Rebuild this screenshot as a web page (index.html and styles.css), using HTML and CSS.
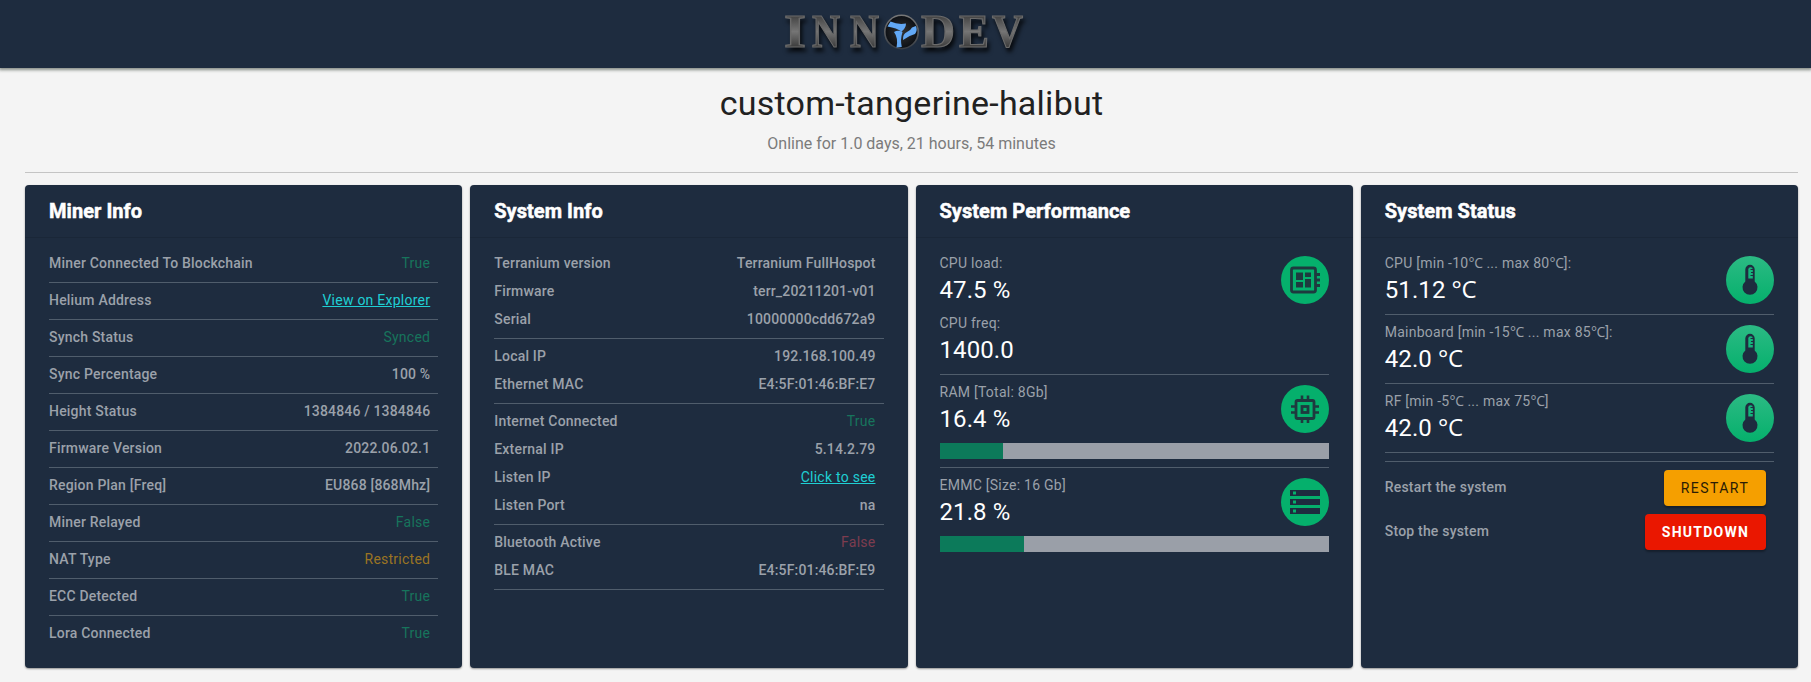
FILE: index.html
```html
<!DOCTYPE html>
<html lang="en">
<head>
<meta charset="utf-8">
<title>custom-tangerine-halibut</title>
<link rel="stylesheet" href="styles.css">
</head>
<body>
<svg width="0" height="0" class="defs" aria-hidden="true">
  <symbol id="thermo" viewBox="0 0 48 48">
    <path d="M19.3 25.500V13.500a4.700 4.700 0 0 1 9.400 0v12a7.500 7.500 0 1 1-9.400 0z" fill="#1e2c3f"/>
    <path d="M22.300 22.500V13.500a2 2 0 0 1 4.500 0v9z" fill="#14b47b"/>
    <path d="M24.500 13.500h2.600M25 16.500h2.100M24.500 19.500h2.600" stroke="#1e2c3f" stroke-width="1.200"/>
  </symbol>
</svg>
<header class="topbar">
  <svg class="logo" width="260" height="68" viewBox="775 0 260 68" role="img" aria-label="INNODEV">
    <defs>
      <linearGradient id="metal" x1="0" y1="0" x2="0" y2="1">
        <stop offset=".2" stop-color="#3f3f3f"/><stop offset=".52" stop-color="#757575"/><stop offset=".8" stop-color="#3f3f3f"/>
      </linearGradient>
      <radialGradient id="orb"><stop offset="0" stop-color="#333"/><stop offset="1" stop-color="#0c0f14"/></radialGradient>
      <linearGradient id="rim" x1="0" y1="0" x2="0" y2="1"><stop offset="0" stop-color="#777"/><stop offset="1" stop-color="#3a3f46"/></linearGradient>
    </defs>
    <g class="wordmark">
      <text x="784" y="46.500" textLength="22" lengthAdjust="spacingAndGlyphs">I</text>
      <text x="812" y="46.500" textLength="28" lengthAdjust="spacingAndGlyphs">N</text>
      <text x="850" y="46.500" textLength="29" lengthAdjust="spacingAndGlyphs">N</text>
      <text x="921" y="46.500" textLength="34" lengthAdjust="spacingAndGlyphs">D</text>
      <text x="959" y="46.500" textLength="30" lengthAdjust="spacingAndGlyphs">E</text>
      <text x="992" y="46.500" textLength="31" lengthAdjust="spacingAndGlyphs">V</text>
    </g>
    <circle cx="901.500" cy="32" r="16.700" fill="url(#orb)" stroke="url(#rim)" stroke-width="1.600"/>
    <path d="M887.500 26.500L890.500 21.500Q898 25 906 23.500Q906 28 901.500 31.500Q897 28 887.500 26.500zM894 32Q898 29.500 902.500 32Q900 40 901.800 47L896.500 47.500Q898.500 38 894 32zM903 40Q902.500 34 907 32Q910.500 30.500 912 27.500L915.800 26Q918 30 915 34Q909 35.500 903 40z" fill="#62a8f5"/>
  </svg>
</header>
<main class="page">
  <div class="hero">
    <h1 class="name">custom-tangerine-halibut</h1>
    <p class="uptime">Online for 1.0 days, 21 hours, 54 minutes</p>
  </div>
  <div class="cards">
    <section class="card">
      <h2 class="title">Miner Info</h2>
      <div class="body">
        <div class="row"><span>Miner Connected To Blockchain</span><span class="val ok">True</span></div><hr>
        <div class="row"><span>Helium Address</span><a class="val link">View on Explorer</a></div><hr>
        <div class="row"><span>Synch Status</span><span class="val ok">Synced</span></div><hr>
        <div class="row"><span>Sync Percentage</span><span class="val">100 %</span></div><hr>
        <div class="row"><span>Height Status</span><span class="val">1384846 / 1384846</span></div><hr>
        <div class="row"><span>Firmware Version</span><span class="val">2022.06.02.1</span></div><hr>
        <div class="row"><span>Region Plan [Freq]</span><span class="val">EU868 [868Mhz]</span></div><hr>
        <div class="row"><span>Miner Relayed</span><span class="val ok">False</span></div><hr>
        <div class="row"><span>NAT Type</span><span class="val warn">Restricted</span></div><hr>
        <div class="row"><span>ECC Detected</span><span class="val ok">True</span></div><hr>
        <div class="row"><span>Lora Connected</span><span class="val ok">True</span></div>
      </div>
    </section>
    <section class="card">
      <h2 class="title">System Info</h2>
      <div class="body">
        <div class="row"><span>Terranium version</span><span class="val">Terranium FullHospot</span></div>
        <div class="row"><span>Firmware</span><span class="val">terr_20211201-v01</span></div>
        <div class="row"><span>Serial</span><span class="val">10000000cdd672a9</span></div><hr>
        <div class="row"><span>Local IP</span><span class="val">192.168.100.49</span></div>
        <div class="row"><span>Ethernet MAC</span><span class="val">E4:5F:01:46:BF:E7</span></div><hr>
        <div class="row"><span>Internet Connected</span><span class="val ok">True</span></div>
        <div class="row"><span>External IP</span><span class="val">5.14.2.79</span></div>
        <div class="row"><span>Listen IP</span><a class="val link">Click to see</a></div>
        <div class="row"><span>Listen Port</span><span class="val">na</span></div><hr>
        <div class="row"><span>Bluetooth Active</span><span class="val bad">False</span></div>
        <div class="row"><span>BLE MAC</span><span class="val">E4:5F:01:46:BF:E9</span></div><hr>
      </div>
    </section>
    <section class="card">
      <h2 class="title">System Performance</h2>
      <div class="body">
        <div class="metric">
          <div><div class="label">CPU load:</div><div class="num">47.5 %</div></div>
          <svg class="badge" viewBox="0 0 48 48"><rect x="10.500" y="12" width="24" height="24" rx="2" fill="none" stroke="#1e3a3f" stroke-width="2.800"/><path d="M15 16.500h7v7.500h-7zM24 16.500h6v4.500h-6zM15 26h7v5.500h-7zM24 23h6v8.500h-6zM35 17h4v3h-4zM35 22.500h4v3h-4zM35 28h4v3h-4z" fill="#1e3a3f"/></svg>
        </div>
        <div class="metric">
          <div><div class="label">CPU freq:</div><div class="num">1400.0</div></div>
        </div><hr>
        <div class="metric">
          <div><div class="label">RAM [Total: 8Gb]</div><div class="num">16.4 %</div></div>
          <svg class="badge" viewBox="0 0 48 48"><rect x="15" y="15.500" width="18" height="18" rx="1.500" fill="none" stroke="#1e3a3f" stroke-width="2.800"/><rect x="21" y="21.500" width="6" height="6" fill="none" stroke="#1e3a3f" stroke-width="2.800"/><path d="M21 14.500v-4M27 14.500v-4M21 34v4M27 34v4M14 21.500h-4M14 27.500h-4M34 21.500h4M34 27.500h4" stroke="#1e3a3f" stroke-width="2.600"/></svg>
        </div>
        <div class="bar"><div class="fill" style="width:16.200%"></div></div><hr>
        <div class="metric">
          <div><div class="label">EMMC [Size: 16 Gb]</div><div class="num">21.8 %</div></div>
          <svg class="badge" viewBox="0 0 48 48"><path d="M9 12h30v6H9zM9 21h30v6H9zM9 30h30v6H9z" fill="#1e2c3f"/><path d="M12 13.500h3v3h-3zM12 22.500h3v3h-3zM12 31.500h3v3h-3z" fill="#05b06c"/></svg>
        </div>
        <div class="bar"><div class="fill" style="width:21.600%"></div></div>
      </div>
    </section>
    <section class="card">
      <h2 class="title">System Status</h2>
      <div class="body">
        <div class="metric">
          <div><div class="label">CPU [min -10<span class="unit">°C</span> ... max 80<span class="unit">°C</span>]:</div><div class="num">51.12 <span class="unit">°C</span></div></div>
          <svg class="badge shaded"><use href="#thermo"/></svg>
        </div><hr>
        <div class="metric">
          <div><div class="label">Mainboard [min -15<span class="unit">°C</span> ... max 85<span class="unit">°C</span>]:</div><div class="num">42.0 <span class="unit">°C</span></div></div>
          <svg class="badge shaded"><use href="#thermo"/></svg>
        </div><hr>
        <div class="metric">
          <div><div class="label">RF [min -5<span class="unit">°C</span> ... max 75<span class="unit">°C</span>]</div><div class="num">42.0 <span class="unit">°C</span></div></div>
          <svg class="badge shaded"><use href="#thermo"/></svg>
        </div><hr><hr>
        <div class="row action"><span>Restart the system</span><button class="btn restart">RESTART</button></div>
        <div class="row action"><span>Stop the system</span><button class="btn shutdown">SHUTDOWN</button></div>
      </div>
    </section>
  </div>
</main>
</body>
</html>
```
FILE: styles.css
```css
* { box-sizing: border-box; }
html { background: #f4f4f4; }
body { margin: 0; height: 682px; background: #f4f4f4; font-family: Roboto, "Noto Sans", sans-serif; overflow: hidden; }
.defs { position: absolute; }
.topbar { display: flex; justify-content: center; height: 68px; background: #1e2c3f; box-shadow: 0 1px 3px 1px rgba(60,70,60,.6); padding-right: 1px; }
.logo { display: block; overflow: visible; }
.wordmark { font: bold 47px "Liberation Serif", serif; fill: url(#metal); stroke: #6a6a6a; stroke-width: 1.2; filter: drop-shadow(2px 4px 2px rgba(0,0,0,.8)); }
.page { padding: 0 13px 0 25px; }
.hero { height: 105px; border-bottom: 1px solid #c4c4c4; margin-bottom: 12px; text-align: center; }
.name { margin: 0; padding-top: 15px; font-size: 34px; line-height: 40px; font-weight: 400; letter-spacing: .25px; color: #212121; }
.uptime { margin: 9px 0 0; font-size: 16px; line-height: 24px; letter-spacing: -.01px; color: #7b7b7b; }
.cards { display: grid; grid-template-columns: repeat(4, 1fr); gap: 8px; }
.card { height: 483px; background: #1e2c3f; border-radius: 4px; box-shadow: 0 1px 2px rgba(0,0,0,.4); }
.title { margin: 0; height: 53px; padding: 0 24px; border-bottom: 1px solid #1a2738; font-size: 20px; line-height: 52px; font-weight: 700; letter-spacing: .05px; color: #fff; -webkit-text-stroke: .5px #fff; }
.body { padding: 12px 24px; color: #9ba1aa; font-size: 14px; font-weight: 500; letter-spacing: .2px; }
.row { display: flex; justify-content: space-between; height: 28px; line-height: 27px; padding-right: 8px; }
hr { height: 1px; margin: 4px 0; border: 0; background: #505d6c; }
hr + hr { margin-top: 8px; }
.val { letter-spacing: .16px; }
.val.ok, .val.warn, .val.bad, .link { font-weight: 400; letter-spacing: .25px; }
.ok { color: #17745c; }
.warn { color: #9a7423; }
.bad { color: #7e3c4f; }
.link { color: #1fcfd4; text-decoration: underline; }
.metric { display: flex; justify-content: space-between; height: 60px; }
.label { font-weight: 400; letter-spacing: .25px; line-height: 27px; height: 24px; }
.num { font-size: 24px; line-height: 32px; font-weight: 400; letter-spacing: .1px; color: #fff; }
.unit { font-family: "Open Sans", sans-serif; line-height: 1; letter-spacing: -.3px; }
.badge { width: 48px; height: 48px; margin-top: 6px; border-radius: 50%; background: #05b06c; }
.shaded { background: linear-gradient(#2cba84, #05b06c); }
.bar { height: 16px; margin: 4px 0 8px; background: #9a9fa8; }
.fill { height: 100%; background: #0c7a5a; }
.action { height: 44px; line-height: 41px; align-items: center; }
.action span { padding-bottom: 2px; }
.btn { height: 36px; padding: 0 16px; border: 0; border-radius: 4px; font: 500 14px/36px Roboto, sans-serif; letter-spacing: 1.450px; box-shadow: 0 2px 2px rgba(0,0,0,.3); }
.restart { width: 102px; background: #f59f00; color: #2a1c05; font-weight: 400; }
.shutdown { width: 121px; background: #ea1700; color: #fff; font-weight: 700; letter-spacing: 1.250px; }
```
